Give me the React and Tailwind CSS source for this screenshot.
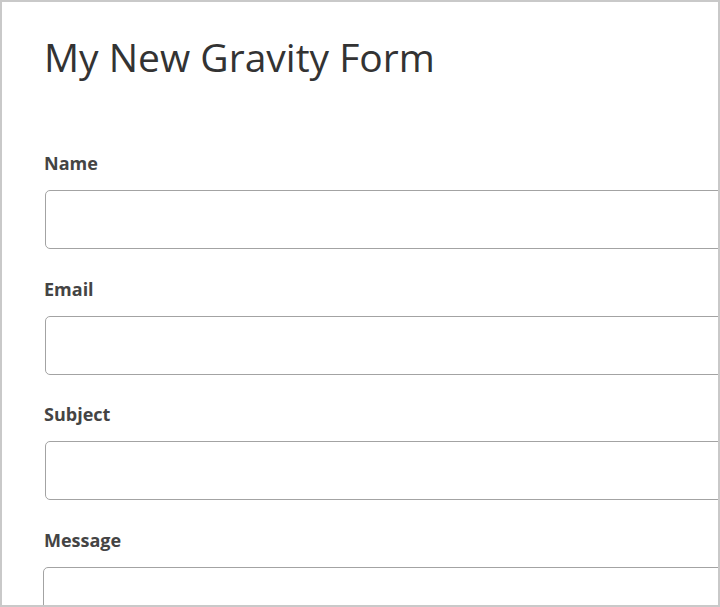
export default function App() {
  const fields = ['Name', 'Email', 'Subject']

  return (
    <div className="w-[720px] h-[607px] bg-white border-2 border-[#c9c9c9] overflow-hidden" style={{ fontFamily: '"Open Sans", "Noto Sans", sans-serif' }}>
      <div className="pl-[42px] pt-[30px]">
        <h1 className="text-[39px] leading-[50px] text-[#333] font-medium">My New Gravity Form</h1>

        <form className="mt-[69px] flex flex-col gap-[27.5px]">
          {fields.map((f) => (
            <div key={f} className="flex flex-col">
              <label className="text-[18px] leading-[24px] font-bold text-[#444]">{f}</label>
              <input
                type="text"
                className="mt-[15px] ml-px w-[720px] h-[59px] border border-[#a3a3a3] rounded-[5px] bg-white"
              />
            </div>
          ))}
          <div className="flex flex-col">
            <label className="text-[18px] leading-[24px] font-bold text-[#444]">Message</label>
            <textarea className="mt-[15px] -ml-px w-[720px] h-[120px] border border-[#a3a3a3] rounded-[5px] bg-white resize-none" />
          </div>
        </form>
      </div>
    </div>
  )
}
